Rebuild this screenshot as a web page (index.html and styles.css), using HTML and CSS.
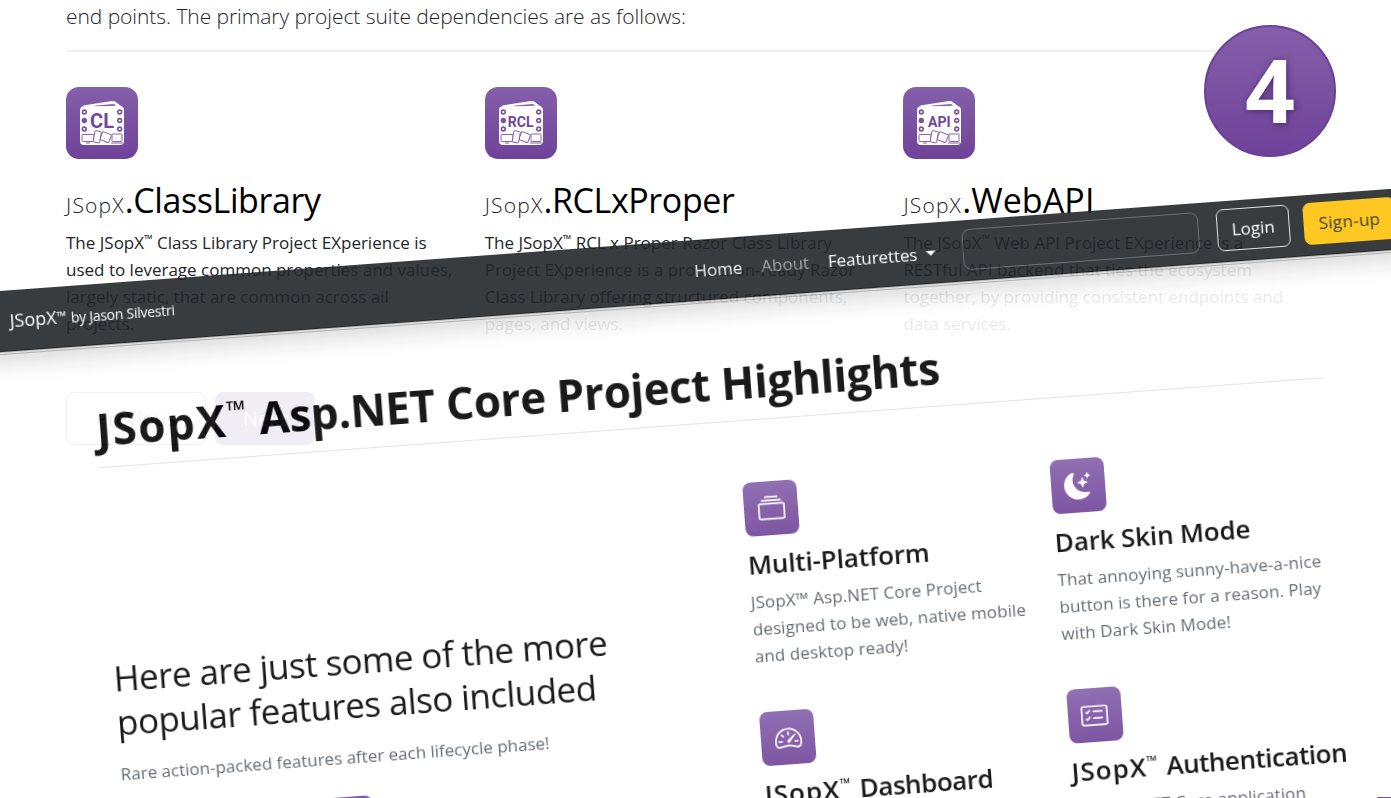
FILE: index.html
```
<!DOCTYPE html>
<html lang="en">
<head>
<meta charset="utf-8">
<title>JSopX</title>
<link rel="stylesheet" href="styles.css">
</head>
<body>
<svg class="defs" width="0" height="0" aria-hidden="true">
  <symbol id="cards" viewBox="0 0 72 72">
    <path d="M17 18.500 L46 14 Q49 13.500 51 16 L57 20.500 L52 21 L20 21Z" fill="#fff"/>
    <path d="M29 19 L48 17.300 L49.500 18.600 L30 19.400Z" fill="#7a54a3" stroke="#7a54a3" stroke-width=".5"/>
    <rect x="14" y="19.300" width="44" height="38.700" rx="4" fill="#fff"/>
    <g fill="#fff" stroke="#7a54a3" stroke-width="1.600">
      <circle cx="18.300" cy="25" r="1.900"/><circle cx="18.300" cy="33.500" r="1.900" fill="#7a54a3"/><circle cx="18.300" cy="42" r="1.900"/>
      <circle cx="53.700" cy="25" r="1.900"/><circle cx="53.700" cy="33.500" r="1.900"/><circle cx="53.700" cy="42" r="1.900"/>
    </g>
    <g fill="#fff" stroke="#7a54a3" stroke-width=".9">
      <rect x="16" y="47.500" width="12" height="7" rx=".8"/><path d="M20 56h4"/>
      <rect x="46" y="47" width="10" height="7.500" rx=".8"/><path d="M45 56h12"/>
      <rect x="35" y="46" width="9.500" height="8.500" rx="1" transform="rotate(22 40 50)"/>
      <rect x="28" y="44" width="6.500" height="11.500" rx="1" transform="rotate(10 31 50)"/>
    </g>
  </symbol>
</svg>

<main class="suite">
  <p class="lead">end points. The primary project suite dependencies are as follows:</p>
  <div class="packages">
    <article class="package">
      <div class="tile"><svg width="72" height="72"><use href="#cards"/></svg><b class="mark mark-lg">CL</b></div>
      <h3><small>JSopX</small>.ClassLibrary</h3>
      <p>The JSopX<sup>™</sup> Class Library Project EXperience is<br>used to leverage common properties and values,<br>largely static, that are common across all<br>projects.</p>
    </article>
    <article class="package">
      <div class="tile"><svg width="72" height="72"><use href="#cards"/></svg><b class="mark">RCL</b></div>
      <h3><small>JSopX</small>.RCLxProper</h3>
      <p>The JSopX<sup>™</sup> RCL x Proper Razor Class Library<br>Project EXperience is a production-ready Razor<br>Class Library offering structured components,<br>pages, and views.</p>
    </article>
    <article class="package">
      <div class="tile"><svg width="72" height="72"><use href="#cards"/></svg><b class="mark">API</b></div>
      <h3 class="wide"><small>JSopX</small>.WebAPI</h3>
      <p>The JSopX<sup>™</sup> Web API Project EXperience is a<br>RESTful API backend that ties the ecosystem<br>together, by providing consistent endpoints and<br>data services.</p>
    </article>
  </div>
  <div class="pager"><span class="prev">Previous</span><span class="next">Next</span></div>
</main>

<div class="step">4</div>

<section class="sheet">
  <nav class="navbar">
    <div class="brand">JSopX<span class="tm">™</span> <small>by Jason Silvestri</small></div>
    <div class="links">
      <a>Home</a><a class="muted">About</a><a class="drop">Featurettes<i></i></a>
    </div>
    <div class="search"></div>
    <div class="login">Login</div>
    <div class="signup">Sign-up</div>
  </nav>
  <div class="body">
    <h1><span class="name">JSopX</span><sup>™</sup> Asp.NET Core Project Highlights</h1>
    <div class="columns">
      <div class="intro">
        <h2>Here are just some of the more<br>popular features also included</h2>
        <p>Rare action-packed features after each lifecycle phase!</p>
        <div class="cta"></div>
      </div>
      <div class="features">
        <article>
          <div class="icon"><svg viewBox="0 0 16 16"><path d="M2.500 3.500a.5.5 0 0 1 0-1h11a.5.5 0 0 1 0 1zm2-2a.5.5 0 0 1 0-1h7a.5.5 0 0 1 0 1zM0 13a1.500 1.500 0 0 0 1.500 1.500h13A1.500 1.500 0 0 0 16 13V6a1.500 1.500 0 0 0-1.500-1.500h-13A1.500 1.500 0 0 0 0 6zm1.500.5A.5.5 0 0 1 1 13V6a.5.5 0 0 1 .5-.5h13a.5.5 0 0 1 .5.5v7a.5.5 0 0 1-.5.5z"/></svg></div>
          <h4>Multi-Platform</h4>
          <p>JSopX™ Asp.NET Core Project<br>designed to be web, native mobile<br>and desktop ready!</p>
        </article>
        <article>
          <div class="icon"><svg viewBox="0 0 16 16"><path d="M6 .278a.77.77 0 0 1 .08.858 7.200 7.200 0 0 0-.878 3.460c0 4.021 3.278 7.277 7.318 7.277q.792-.001 1.533-.16a.79.79 0 0 1 .81.316.73.73 0 0 1-.031.893A8.350 8.350 0 0 1 8.344 16C3.734 16 0 12.286 0 7.710 0 4.266 2.114 1.312 5.124.060A.75.75 0 0 1 6 .278"/><path d="M10.794 3.148a.217.217 0 0 1 .412 0l.387 1.162c.173.518.579.924 1.097 1.097l1.162.387a.217.217 0 0 1 0 .412l-1.162.387a1.730 1.730 0 0 0-1.097 1.097l-.387 1.162a.217.217 0 0 1-.412 0l-.387-1.162A1.730 1.730 0 0 0 9.310 6.593l-1.162-.387a.217.217 0 0 1 0-.412l1.162-.387a1.730 1.730 0 0 0 1.097-1.097zM13.863.099a.145.145 0 0 1 .274 0l.258.774c.115.346.386.617.732.732l.774.258a.145.145 0 0 1 0 .274l-.774.258a1.160 1.160 0 0 0-.732.732l-.258.774a.145.145 0 0 1-.274 0l-.258-.774a1.160 1.160 0 0 0-.732-.732l-.774-.258a.145.145 0 0 1 0-.274l.774-.258c.346-.115.617-.386.732-.732z"/></svg></div>
          <h4>Dark Skin Mode</h4>
          <p>That annoying sunny-have-a-nice<br>button is there for a reason. Play<br>with Dark Skin Mode!</p>
        </article>
        <article>
          <div class="icon"><svg viewBox="0 0 16 16"><path d="M8 4a.5.5 0 0 1 .5.5V6a.5.5 0 0 1-1 0V4.500A.5.5 0 0 1 8 4M3.732 5.732a.5.5 0 0 1 .707 0l.915.914a.5.5 0 1 1-.708.708l-.914-.915a.5.5 0 0 1 0-.707M2 10a.5.5 0 0 1 .5-.5h1.586a.5.5 0 0 1 0 1H2.500A.5.5 0 0 1 2 10m9.500 0a.5.5 0 0 1 .5-.5h1.500a.5.5 0 0 1 0 1H12a.5.5 0 0 1-.5-.5m.754-4.246a.389.389 0 0 0-.527-.020L7.547 9.310a.91.91 0 1 0 1.302 1.258l3.434-4.297a.389.389 0 0 0-.029-.518z"/><path fill-rule="evenodd" d="M0 10a8 8 0 1 1 15.547 2.661c-.442 1.253-1.845 1.602-2.932 1.250C11.309 13.488 9.475 13 8 13c-1.474 0-3.310.488-4.615.911-1.087.352-2.490.003-2.932-1.250A8 8 0 0 1 0 10m8-7a7 7 0 0 0-6.603 9.329c.203.575.923.876 1.680.63C4.397 12.533 6.358 12 8 12s3.604.532 4.923.960c.757.245 1.477-.056 1.680-.631A7 7 0 0 0 8 3"/></svg></div>
          <h4 class="tight"><span class="name">JSopX</span><sup>™</sup> Dashboard</h4>
        </article>
        <article>
          <div class="icon"><svg viewBox="0 0 16 16"><path d="M14.500 3a.5.5 0 0 1 .5.5v9a.5.5 0 0 1-.5.5h-13a.5.5 0 0 1-.5-.5v-9a.5.5 0 0 1 .5-.5zm-13-1A1.500 1.500 0 0 0 0 3.500v9A1.500 1.500 0 0 0 1.500 14h13a1.500 1.500 0 0 0 1.500-1.500v-9A1.500 1.500 0 0 0 14.500 2z"/><path d="M7 5.500a.5.5 0 0 1 .5-.5h5a.5.5 0 0 1 0 1h-5a.5.5 0 0 1-.5-.5m-1.496-.854a.5.5 0 0 1 0 .708l-1.500 1.500a.5.5 0 0 1-.708 0l-.5-.5a.5.5 0 1 1 .708-.708l.146.147 1.146-1.147a.5.5 0 0 1 .708 0M7 9.500a.5.5 0 0 1 .5-.5h5a.5.5 0 0 1 0 1h-5a.5.5 0 0 1-.5-.5m-1.496-.854a.5.5 0 0 1 0 .708l-1.500 1.500a.5.5 0 0 1-.708 0l-.5-.5a.5.5 0 0 1 .708-.708l.146.147 1.146-1.147a.5.5 0 0 1 .708 0"/></svg></div>
          <h4 class="tight"><span class="name">JSopX</span><sup>™</sup> Authentication</h4>
          <p>For Asp.NET Core application</p>
        </article>
      </div>
    </div>
  </div>
</section>
<div class="corner"></div>
</body>
</html>
```

FILE: styles.css
```
* { box-sizing: border-box; margin: 0; }
html { overflow: hidden; }
body {
  position: relative; width: 1391px; height: 798px; overflow: hidden; background: #fff;
  font-family: "Open Sans", "Noto Sans", sans-serif; color: #212529; white-space: nowrap;
}
.defs { position: absolute; }
sup { font-size: .65em; line-height: 0; vertical-align: .55em; }

.suite { padding: 0 66px; }
.lead {
  height: 52px; line-height: 33px; border-bottom: 2px solid #f0f0f0;
  font-size: 21px; font-weight: 300; letter-spacing: -.06px;
}
.packages { display: grid; grid-template-columns: repeat(3, 418.7px); padding-top: 35.400px; }
.tile {
  position: relative; width: 72px; height: 72px; border-radius: 13px;
  background: linear-gradient(#845faa, #6f4299);
}
.tile svg { display: block; }
.mark {
  position: absolute; inset: 24.500px 0 auto; text-align: center;
  font: 700 14px/20px Roboto, sans-serif; color: #7048a0;
}
.mark-lg { top: 23.500px; font-size: 20px; }
.package h3 { margin-top: 15px; line-height: 52px; font-size: 34px; font-weight: 400; color: #000; letter-spacing: -.4px; }
.package .wide { letter-spacing: .1px; }
.package h3 small { font-size: 21px; font-weight: 300; color: #212529; letter-spacing: 1.200px; }
.package p { margin-top: -2px; font-size: 17px; line-height: 27px; }
.pager { display: flex; gap: 9px; margin-top: 54.500px; font-size: 20px; line-height: 51px; text-align: center; }
.pager span { height: 53px; border: 1px solid #6c757d; border-radius: 8px; }
.prev { width: 140px; color: #6c757d; }
.pager .next { width: 100px; color: #fff; background: #6a4898; border-color: #6a4898; }

.step {
  position: absolute; left: 1204px; top: 25px; width: 132px; height: 132px; border-radius: 50%;
  border: 2px solid #6c4098; background: linear-gradient(#845faa, #6f4299);
  text-align: center; font-size: 87px; line-height: 124px; font-weight: 700; color: #fff;
  text-shadow: 1px 1px 7px rgba(30, 0, 60, .5);
}

/* Tilted sheet lying over the page */
.sheet {
  position: absolute; left: -60px; top: 291px; width: 1600px; height: 720px;
  transform: rotate(-4.200deg); transform-origin: 60px 0; opacity: .9; background: #fff;
}
.navbar {
  position: relative; display: flex; align-items: center; height: 60px; padding-left: 67.500px;
  background: #212529; color: #fff; font-size: 17px;
  box-shadow: 0 1px 0 #0c0e10, 0 2px 0 #b5b5b5, 0 3px 0 #e2e2e2, 0 4px 0 #a8a8a8, 0 22px 22px -10px rgba(0, 0, 0, .16);
}
.brand { width: 686.500px; font-size: 18px; letter-spacing: 0; }
.brand .tm { font-size: 12.500px; vertical-align: 3px; }
.brand small { font-size: 14px; letter-spacing: -.25px; }
.links { display: flex; gap: 19px; width: 269px; font-weight: 500; }
.muted { color: #9c9fa1; }
.drop { display: flex; align-items: center; gap: 9px; letter-spacing: -.1px; }
.drop i { border: 5px solid transparent; border-top-color: #fff; border-bottom: 0; }
.search { width: 237px; height: 41px; margin-top: -2px; border: 1px solid #5b6064; border-radius: 8px; }
.login, .signup { height: 42px; line-height: 40px; margin-top: -2px; border: 1px solid #dfe0e1; border-radius: 7px; text-align: center; }
.login { width: 73px; margin-left: 18px; font-weight: 500; }
.signup { width: 92px; margin-left: 14px; letter-spacing: .3px; background: #ffc107; border-color: #ffc107; color: #212529; }

.body { padding-left: 145px; color: #000; }
h1 {
  width: 1229px; height: 123.500px; padding: 54px 0 0 1px; line-height: 62px; border-bottom: 1px solid #dee2e6;
  font-size: 44px; font-weight: 700; letter-spacing: -.33px;
}
h1 .name { letter-spacing: 1.500px; }
h1 sup { margin-right: 2px; font-size: .58em; font-weight: 600; vertical-align: .65em; }
.columns { display: flex; }
.intro { width: 641px; padding-top: 189px; }
.intro h2 { font-size: 35px; line-height: 44.500px; font-weight: 400; letter-spacing: -.53px; }
.intro p { margin-top: 15.500px; font-size: 17px; line-height: 27px; color: #545c63; }
.cta { width: 249px; height: 50px; margin-top: 26px; border-radius: 8px; background: linear-gradient(#6f42a0, #845faa); }
.features { display: grid; grid-template-columns: repeat(2, 307.500px); grid-auto-rows: 230px; padding-top: 62.500px; }
.icon {
  display: grid; place-items: center; width: 54px; height: 54px; border-radius: 8px;
  background: linear-gradient(#845faa, #6f4299);
}
.icon svg { width: 27px; height: 27px; fill: #fff; }
.features h4 { margin-top: 7.500px; font-size: 26px; line-height: 40px; font-weight: 600; letter-spacing: -.13px; }
.features .tight { letter-spacing: -.45px; }
.features h4 .name { letter-spacing: 1px; }
.features h4 sup { font-size: .54em; font-weight: 400; vertical-align: .65em; margin-right: 3px; }
.features p { margin-top: 4px; font-size: 17px; line-height: 27px; letter-spacing: .1px; color: #545c63; }
.corner { position: absolute; left: 1377px; top: 797px; width: 14px; height: 1px; background: #7952a3; }
```
